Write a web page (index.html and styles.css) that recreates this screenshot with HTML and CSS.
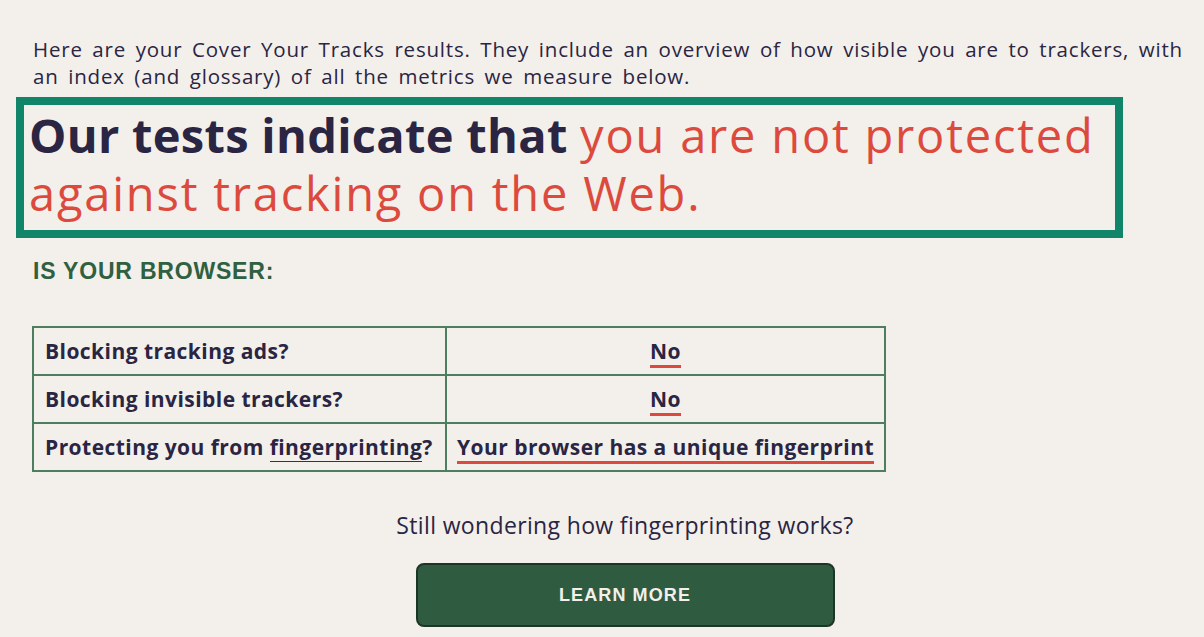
FILE: index.html
```html
<!DOCTYPE html>
<html lang="en">
<head>
    <meta charset="UTF-8">
    <meta name="viewport" content="width=device-width, initial-scale=1.0">
    <title>Cover Your Tracks - Results</title>
    <link rel="stylesheet" href="styles.css">
</head>
<body>
    <div class="results">

        <p class="intro">Here are your Cover Your Tracks results. They include an overview of how visible you are to trackers, with an index (and glossary) of all the metrics we measure below.</p>

        <div class="verdict">
            <h1><strong>Our tests indicate that</strong> <span class="bad">you are not protected against tracking on the Web.</span></h1>
        </div>

        <h3 class="sub-title">IS YOUR BROWSER:</h3>

        <table class="summary" cellspacing="0">
            <tbody>
                <tr>
                    <td>Blocking tracking ads?</td>
                    <td class="answer"><a href="#ads">No</a></td>
                </tr>
                <tr>
                    <td>Blocking invisible trackers?</td>
                    <td class="answer"><a href="#trackers">No</a></td>
                </tr>
                <tr>
                    <td>Protecting you from <a class="term" href="#fp">fingerprinting</a>?</td>
                    <td class="answer"><a href="#fp-result">Your browser has a unique fingerprint</a></td>
                </tr>
            </tbody>
        </table>

        <div class="more">
            <p>Still wondering how fingerprinting works?</p>
            <a class="btn" href="#learn">LEARN MORE</a>
        </div>
    </div>
</body>
</html>
```

FILE: styles.css
```css
*{
    margin: 0px;
    padding: 0px;
    box-sizing: border-box;
}

body{
    background-color: #f3efeb;
    color: #2a2542;
    font-family: "Open Sans", "Liberation Sans", sans-serif;
    overflow: hidden;
}

.results{
    padding-top: 36px;
    padding-left: 16px;
}

.intro{
    margin-left: 17px;
    width: 1172px;
    font-size: 20.5px;
    line-height: 27px;
    letter-spacing: 0.8px;
    word-spacing: 3.5px;
}

.verdict{
    width: 1107px;
    margin-top: 7px;
    border: 8px solid #11856a;
    padding: 1px 5px 8px 5px;
}

.verdict h1{
    font-size: 47px;
    line-height: 58px;
    font-weight: 400;
    letter-spacing: 0.3px;
}

.verdict strong{
    font-weight: 700;
}

.verdict .bad{
    color: #dc4a3d;
    letter-spacing: 1.8px;
}

.sub-title{
    margin-top: 20px;
    margin-left: 17px;
    color: #2f6040;
    font-family: "Liberation Sans", Arial, sans-serif;
    font-size: 23px;
    font-weight: 700;
    letter-spacing: 0.8px;
}

.summary{
    margin-top: 41px;
    margin-left: 16px;
    width: 854px;
    border-collapse: collapse;
    font-size: 21px;
    font-weight: 700;
    letter-spacing: 0.45px;
    white-space: nowrap;
}

.summary td{
    height: 48px;
    border: 2px solid #4e7e60;
    padding: 0px 10px 0px 11px;
}

.summary td:first-child{
    width: 413px;
}

.summary .answer{
    text-align: center;
    padding: 0px 6px;
    letter-spacing: 0.45px;
}

.summary a{
    color: #2a2542;
    text-decoration: none;
}

.summary .answer a{
    border-bottom: 3px solid #dc4a3d;
    padding-bottom: 0px;
}

.summary .term{
    border-bottom: 1px solid #22402f;
}

.more{
    padding-left: 30px;
    text-align: center;
}

.more p{
    margin-top: 37px;
    font-size: 23px;
    letter-spacing: 0.35px;
}

.btn{
    display: inline-block;
    width: 419px;
    height: 64px;
    margin-top: 22px;
    line-height: 60px;
    background-color: #2f5c41;
    border: 2px solid #1d3527;
    border-radius: 8px;
    color: #f3efeb;
    font-family: "Liberation Sans", Arial, sans-serif;
    font-size: 18px;
    font-weight: 700;
    letter-spacing: 1.1px;
    text-decoration: none;
}
```
